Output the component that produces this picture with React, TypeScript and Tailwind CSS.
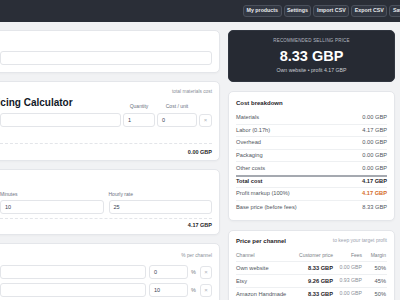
const navItems = ["My products", "Settings", "Import CSV", "Export CSV", "Save"];

const costRows = [
  { label: "Materials", value: "0.00 GBP" },
  { label: "Labor (0.17h)", value: "4.17 GBP" },
  { label: "Overhead", value: "0.00 GBP" },
  { label: "Packaging", value: "0.00 GBP" },
  { label: "Other costs", value: "0.00 GBP" },
];

const channels = [
  { name: "Own website", price: "8.33 GBP", fees: "0.00 GBP", margin: "50%" },
  { name: "Etsy", price: "9.26 GBP", fees: "0.93 GBP", margin: "45%" },
  { name: "Amazon Handmade", price: "8.33 GBP", fees: "0.00 GBP", margin: "50%" },
];

const card = "bg-white rounded-[5px] border border-[#e4e6ea] shadow-[0_1px_2px_rgba(0,0,0,0.03)]";

const Field = ({ value = "" }: { value?: string }) => (
  <div className="h-[14px] min-w-0 rounded-[3px] border border-[#e3e5e9] bg-white pl-[4px] flex items-center text-[5.5px] text-[#374151]">
    {value}
  </div>
);

const RemoveButton = () => (
  <div className="h-[13px] w-full rounded-[3px] border border-[#e3e5e9] flex items-center justify-center text-[6px] text-[#b0b4bb]">
    ×
  </div>
);

const App = () => {
  return (
    <div className="w-[400px] h-[300px] overflow-hidden bg-[#f1f2f4] font-['Liberation_Sans',Arial,sans-serif]">
      {/* Top bar */}
      <header className="h-[22px] bg-[#2a2e37] flex items-center gap-[2px] pl-[243px] whitespace-nowrap overflow-hidden">
        {navItems.map((item) => (
          <button
            key={item}
            className="h-[12px] shrink-0 px-[2.5px] rounded-[3px] border border-[#4b515c] bg-[#323742] text-[5.3px] font-bold leading-none text-[#e8eaed]"
          >
            {item}
          </button>
        ))}
      </header>

      <main className="flex justify-end gap-[8px] pr-[5px] pt-[8px]">
        {/* Left column */}
        <div className="w-[228px] shrink-0 flex flex-col gap-[8px]">
          <div className={`${card} px-[7px] pt-[20px] pb-[7px]`}>
            <Field />
          </div>

          <div className={`${card} px-[7px] pt-[7px] pb-[4px]`}>
            <div className="text-right text-[4.8px] leading-[6px] text-[#8a8f98]">total materials cost</div>
            <div className="mt-[1px] grid grid-cols-[1fr_32px_40px_13px] gap-x-[2px] gap-y-[3px] items-end">
              <h1 className="-ml-[13px] text-[10px] font-bold leading-[14px] text-[#111827] whitespace-nowrap">
                Pricing Calculator
              </h1>
              <div className="mb-[1px] text-center text-[5px] leading-[6px] text-[#6b7280]">Quantity</div>
              <div className="mb-[1px] text-center text-[5px] leading-[6px] text-[#6b7280]">Cost / unit</div>
              <div />
              <Field />
              <Field value="1" />
              <Field value="0" />
              <RemoveButton />
            </div>
            <div className="mt-[16px] border-t border-dashed border-[#e3e5e9] pt-[4px] text-right text-[5.5px] font-bold leading-[8px] text-[#1f2328]">
              0.00 GBP
            </div>
          </div>

          <div className={`${card} px-[7px] pt-[21px] pb-[5px]`}>
            <div className="grid grid-cols-2 gap-x-[5px] gap-y-[2px]">
              <div className="text-[5px] leading-[7px] text-[#6b7280]">Minutes</div>
              <div className="text-[5px] leading-[7px] text-[#6b7280]">Hourly rate</div>
              <Field value="10" />
              <Field value="25" />
            </div>
            <div className="mt-[4px] border-t border-dashed border-[#e3e5e9] pt-[2px] text-right text-[5.5px] font-bold leading-[8px] text-[#1f2328]">
              4.17 GBP
            </div>
          </div>

          <div className={`${card} px-[7px] pt-[9px] pb-[7px]`}>
            <div className="text-right text-[4.8px] leading-[6px] text-[#8a8f98]">% per channel</div>
            <div className="mt-[6px] flex flex-col gap-[4px]">
              {["0", "10", "15"].map((v) => (
                <div key={v} className="grid grid-cols-[1fr_39px_6px_12px] gap-x-[3px] items-center">
                  <Field />
                  <Field value={v} />
                  <span className="text-[5.5px] text-[#777b82]">%</span>
                  <RemoveButton />
                </div>
              ))}
            </div>
          </div>
        </div>

        {/* Right column */}
        <div className="w-[167px] shrink-0 flex flex-col gap-[9px]">
          <div className="rounded-[5px] bg-[#262a33] border border-[#30353f] pt-[7px] pb-[7px] flex flex-col items-center text-center">
            <div className="text-[4.5px] leading-[6px] tracking-[0.2px] uppercase text-[#b5b9c1]">
              Recommended selling price
            </div>
            <div className="mt-[4px] text-[14.5px] font-bold leading-[16px] text-white">8.33 GBP</div>
            <div className="mt-[3px] text-[5.2px] leading-[7px] text-[#c9ccd2]">Own website • profit 4.17 GBP</div>
          </div>

          <div className={`${card} px-[7px] pt-[7px] pb-[6px]`}>
            <h2 className="text-[6px] font-bold leading-[8px] text-[#1f2328]">Cost breakdown</h2>
            <div className="mt-[5px]">
              {costRows.map((r, i) => (
                <div
                  key={r.label}
                  className={`h-[12.5px] flex items-center justify-between text-[5.7px] text-[#51565e] ${
                    i < costRows.length - 1 ? "border-b border-[#eef0f2]" : ""
                  }`}
                >
                  <span>{r.label}</span>
                  <span>{r.value}</span>
                </div>
              ))}
              <div className="h-[13px] flex items-center justify-between border-t-2 border-b border-t-[#a5a9b0] border-b-[#eef0f2] text-[5.7px] font-bold text-[#1f2328]">
                <span>Total cost</span>
                <span>4.17 GBP</span>
              </div>
              <div className="h-[13px] flex items-center justify-between border-b border-[#eef0f2] text-[5.7px] text-[#51565e]">
                <span>Profit markup (100%)</span>
                <span className="font-bold text-[#d46a1f]">4.17 GBP</span>
              </div>
              <div className="h-[13px] flex items-center justify-between text-[5.7px] text-[#51565e]">
                <span>Base price (before fees)</span>
                <span>8.33 GBP</span>
              </div>
            </div>
          </div>

          <div className={`${card} px-[7px] pt-[6px] pb-[6px]`}>
            <div className="flex items-center justify-between">
              <h2 className="text-[6px] font-bold leading-[8px] text-[#1f2328]">Price per channel</h2>
              <span className="text-[5px] text-[#9ca3af]">to keep your target profit</span>
            </div>
            <div className="mt-[5px]">
              <div className="h-[12.5px] grid grid-cols-[1fr_46px_29px_25px] items-center border-b border-[#eef0f2] text-[5px] text-[#7a7f87]">
                <span>Channel</span>
                <span className="text-right">Customer price</span>
                <span className="text-right">Fees</span>
                <span className="text-right pr-[1px]">Margin</span>
              </div>
              {channels.map((c) => (
                <div
                  key={c.name}
                  className="h-[13px] grid grid-cols-[1fr_46px_29px_25px] items-center border-b border-[#eef0f2] text-[5.7px] text-[#51565e]"
                >
                  <span className="whitespace-nowrap">{c.name}</span>
                  <span className="text-right font-bold text-[#1f2328]">{c.price}</span>
                  <span className="text-right text-[5.2px] text-[#8a8f98]">{c.fees}</span>
                  <span className="text-right pr-[1px]">{c.margin}</span>
                </div>
              ))}
            </div>
          </div>
        </div>
      </main>
    </div>
  );
};

export default App;
